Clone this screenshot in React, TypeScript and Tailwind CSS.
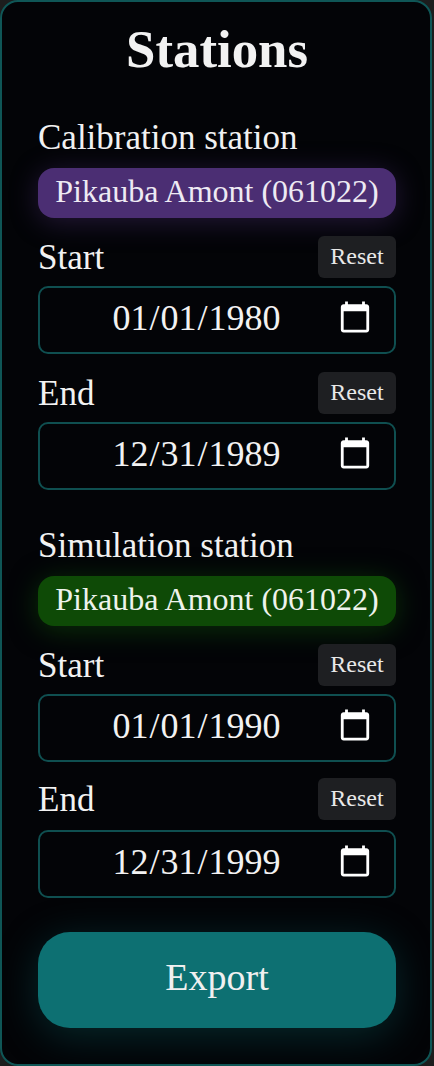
import React from "react";

function DateRow({ label, value, last }: { label: string; value: string; last?: boolean }) {
  return (
    <div className={last ? "flex flex-col gap-[10px] -mt-[2px]" : "flex flex-col gap-2"}>
      <div className="flex items-center justify-between h-[42px]">
        <span className="text-[35px] leading-none text-[#f2f2f2]">{label}</span>
        <button className="w-[78px] h-[42px] rounded-[6px] bg-[#1e1f22] pb-[2px] text-[24px] leading-none text-[#e8e8e8]">Reset</button>
      </div>
      <input
        type="date"
        defaultValue={value}
        className="w-full h-[68px] rounded-[10px] border-2 border-[#0f4f50] bg-transparent pl-[18px] pr-[19px] pb-1 text-[36px] text-[#f2f2f2] [color-scheme:dark] outline-none [&::-webkit-datetime-edit]:flex [&::-webkit-datetime-edit]:justify-center"
      />
    </div>
  );
}

function Station({ title, pill, rows, tight }: { title: string; pill: React.ReactNode; rows: [string, string][]; tight?: boolean }) {
  return (
    <section className="flex flex-col">
      <h2 className="text-[35px] leading-[40px] font-normal text-[#f2f2f2] mb-[10px]">{title}</h2>
      {pill}
      <div className="mt-[18px] flex flex-col gap-[18px]">
        {rows.map(([l, v], i) => (
          <DateRow key={i} label={l} value={v} last={tight && i === 1} />
        ))}
      </div>
    </section>
  );
}

export default function App() {
  return (
    <div className="w-[434px] h-[1066px] bg-[#1c1d1d] font-['Liberation_Serif',serif]">
      <div className="w-[432px] h-full rounded-[18px] border-2 border-[#0f5656] bg-[#030407] pl-9 pr-[34px] pt-[17px] flex flex-col overflow-hidden">
        <h1 className="text-[52.8px] leading-[60px] font-bold text-center text-[#f2f2f2] mb-[39px]">Stations</h1>
        <Station
          title="Calibration station"
          pill={
            <div className="h-[50px] rounded-[16px] bg-[#4b2e73] pb-1 shadow-[0_4px_28px_rgba(75,46,115,0.45)] flex items-center justify-center text-[32px] text-[#eeeaf3] whitespace-nowrap">
              Pikauba Amont (061022)
            </div>
          }
          rows={[["Start", "1980-01-01"], ["End", "1989-12-31"]]}
        />
        <div className="h-[36px]" />
        <Station
          title="Simulation station"
          tight
          pill={
            <div className="h-[50px] rounded-[16px] bg-[#0e4a06] pb-1 shadow-[0_4px_28px_rgba(15,90,10,0.5)] flex items-center justify-center text-[32px] text-[#eef3ec] whitespace-nowrap">
              Pikauba Amont (061022)
            </div>
          }
          rows={[["Start", "1990-01-01"], ["End", "1999-12-31"]]}
        />
        <button className="mt-[34px] h-[96px] w-full rounded-[32px] bg-[#0d7072] pb-[6px] shadow-[0_8px_40px_rgba(13,112,114,0.34)] text-[38px] text-[#f0f0f0]">
          Export
        </button>
      </div>
    </div>
  );
}
